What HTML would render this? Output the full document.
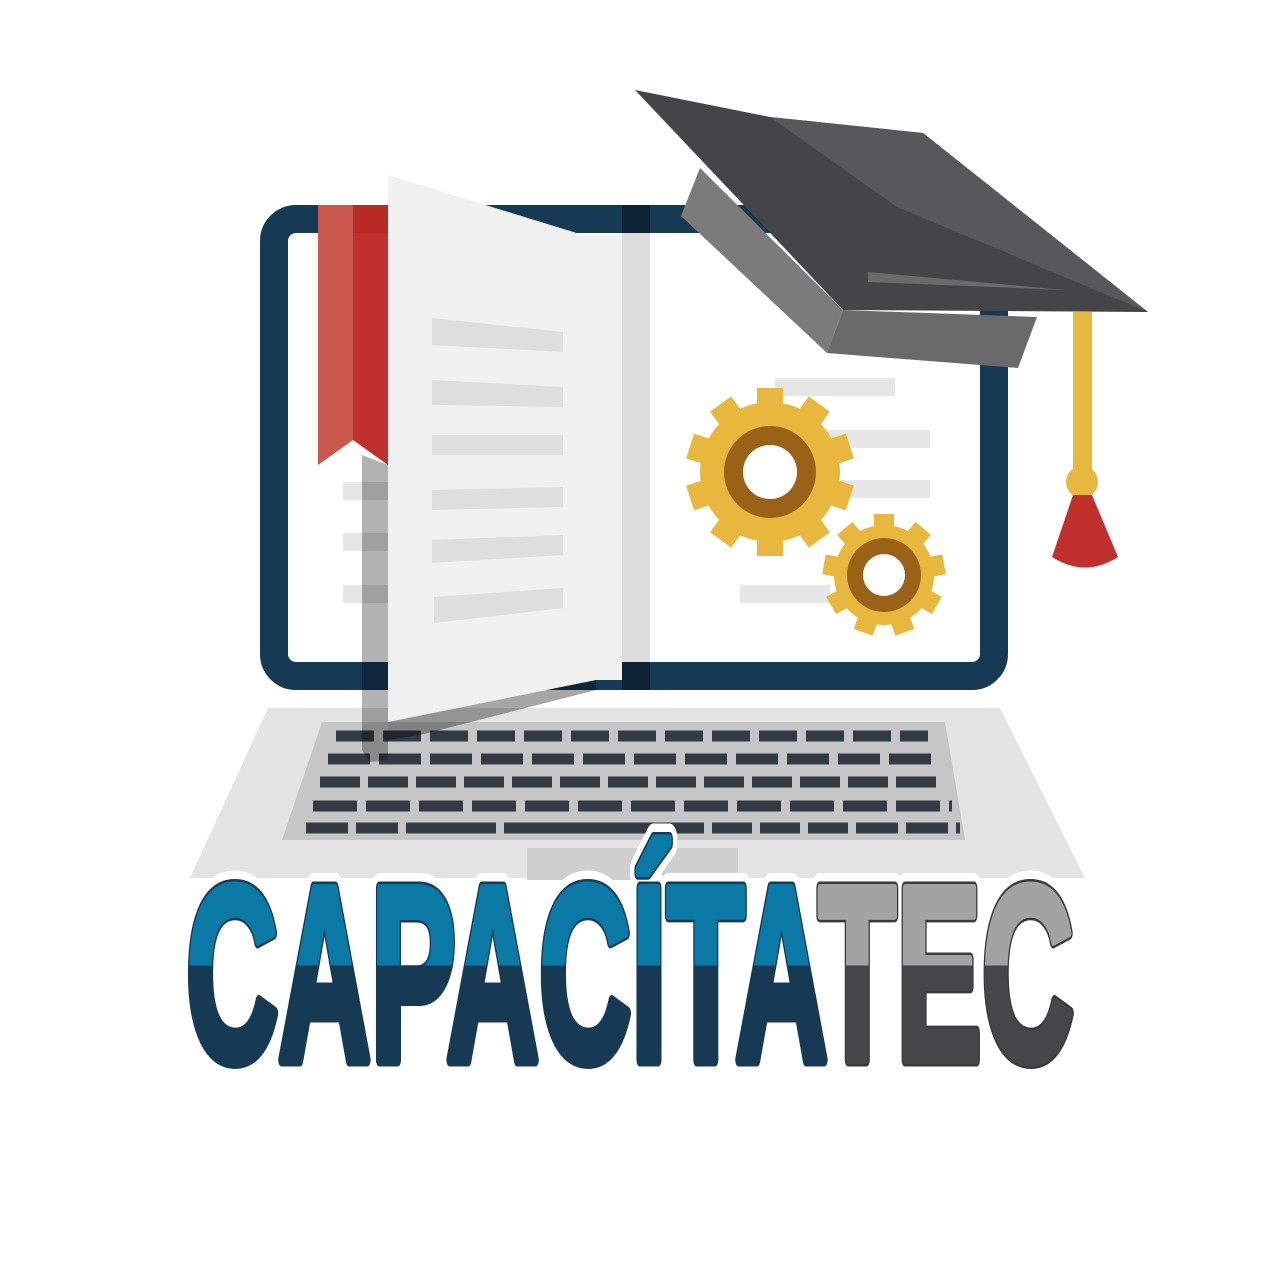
<!DOCTYPE html>
<html><head><meta charset="utf-8"><style>
html,body{margin:0;padding:0;background:#fff;}
svg{display:block;}
</style></head><body>
<svg width="1276" height="1276" viewBox="0 0 1276 1276" xmlns="http://www.w3.org/2000/svg">
<defs>
<linearGradient id="gb" x1="0" y1="875" x2="0" y2="1068" gradientUnits="userSpaceOnUse">
<stop offset="0" stop-color="#0b79a5"/><stop offset="0.47" stop-color="#0b79a5"/><stop offset="0.47" stop-color="#173a54"/><stop offset="1" stop-color="#173a54"/>
</linearGradient>
<linearGradient id="gg" x1="0" y1="875" x2="0" y2="1068" gradientUnits="userSpaceOnUse">
<stop offset="0" stop-color="#a3a3a3"/><stop offset="0.47" stop-color="#a3a3a3"/><stop offset="0.47" stop-color="#454648"/><stop offset="1" stop-color="#454648"/>
</linearGradient>
</defs>
<rect width="1276" height="1276" fill="#fff"/>
<polygon points="268,708 1000,708 1085,878 190,878" fill="#e3e3e3"/>
<polygon points="322,722 945,722 965,840 282,840" fill="#c6c6c6"/>
<g stroke="#343a44" stroke-width="11">
<line x1="336" y1="736" x2="928" y2="736" stroke-dasharray="38 9"/>
<line x1="328" y1="759" x2="936" y2="759" stroke-dasharray="42 9"/>
<line x1="320" y1="782" x2="944" y2="782" stroke-dasharray="40 8"/>
<line x1="313" y1="806" x2="952" y2="806" stroke-dasharray="44 9"/>
<line x1="306" y1="828" x2="960" y2="828" stroke-dasharray="42 8 42 8 90 8 200 8 40 8 40 8 40 8"/>
</g>
<rect x="527" y="848" width="211" height="32" fill="#cfcfcf"/>
<rect x="274" y="219" width="720" height="457" rx="22" fill="#fff" stroke="#173a54" stroke-width="28"/>
<rect x="622" y="205" width="28" height="485" fill="#dcdcdc"/>
<rect x="622" y="205" width="28" height="28" fill="#0d2232"/>
<rect x="622" y="662" width="28" height="28" fill="#0d2232"/>
<g fill="#e6e6e6">
<rect x="775" y="378" width="120" height="18"/>
<rect x="820" y="430" width="110" height="18"/>
<rect x="760" y="480" width="170" height="18"/>
<rect x="740" y="585" width="90" height="18"/>
</g>
<g fill="#e6e6e6">
<rect x="343" y="482" width="45" height="18"/><rect x="343" y="533" width="45" height="18"/><rect x="343" y="585" width="45" height="18"/>
</g>
<polygon points="318,205 353,205 353,440 318,465" fill="#c9574c"/>
<polygon points="353,205 388,205 388,465 353,440" fill="#c0302d"/>
<polygon points="353,205 388,205 388,233 353,233" fill="#b0281f" opacity="0.6"/>
<polygon points="362,455 388,465 388,760 370,762 362,750" fill="#000" opacity="0.3"/>
<polygon points="388,722 596,680 596,690 420,735 388,740" fill="#000" opacity="0.35"/>
<polygon points="388,175 583,235 622,235 622,680 596,680 388,722" fill="#f0f0f0"/>
<g fill="#dedede">
<polygon points="432,318 563,332 563,352 432,345"/>
<polygon points="432,380 563,387 563,407 432,405"/>
<polygon points="432,435 563,435 563,455 432,455"/>
<polygon points="432,490 563,487 563,507 432,510"/>
<polygon points="432,540 563,535 563,555 432,563"/>
<polygon points="434,597 563,588 563,608 434,623"/>
</g>
<g transform="translate(770,472)">
<g fill="#e8b83e">
<circle r="70"/>
<g id="t1"><rect x="-13" y="-84" width="26" height="24"/></g>
<use href="#t1" transform="rotate(36)"/><use href="#t1" transform="rotate(72)"/><use href="#t1" transform="rotate(108)"/><use href="#t1" transform="rotate(144)"/><use href="#t1" transform="rotate(180)"/><use href="#t1" transform="rotate(216)"/><use href="#t1" transform="rotate(252)"/><use href="#t1" transform="rotate(288)"/><use href="#t1" transform="rotate(324)"/>
</g>
<circle r="46" fill="#9a6217"/><circle r="27" fill="#fff"/>
</g>
<g transform="translate(884,575)">
<g fill="#e8b83e">
<circle r="50"/>
<g id="t2"><rect x="-10" y="-61" width="20" height="18"/></g>
<use href="#t2" transform="rotate(40)"/><use href="#t2" transform="rotate(80)"/><use href="#t2" transform="rotate(120)"/><use href="#t2" transform="rotate(160)"/><use href="#t2" transform="rotate(200)"/><use href="#t2" transform="rotate(240)"/><use href="#t2" transform="rotate(280)"/><use href="#t2" transform="rotate(320)"/>
</g>
<circle r="37" fill="#9a6217"/><circle r="21" fill="#fff"/>
</g>
<polygon points="700,168 681,216 827,353 843,310" fill="#7b7b7b"/>
<polygon points="843,310 827,353 1018,368 1037,317" fill="#6a6a6a"/>
<polygon points="635,90 770,117 923,133 1148,312 843,310" fill="#444548"/>
<polygon points="770,117 923,133 1148,312 1000,250 897,207" fill="#57585a"/>
<polygon points="868,272 1065,290 868,282" fill="#6a6a6a"/>
<rect x="1073" y="312" width="19" height="170" fill="#e8b83e"/>
<circle cx="1082" cy="482" r="16" fill="#e8b83e"/>
<path d="M1073,495 L1092,495 L1118,557 Q1085,578 1052,557 Z" fill="#c0302d"/>
<g font-family="'Liberation Sans Narrow','Liberation Sans',sans-serif" font-weight="bold" font-size="250">
<text x="186" y="1060" textLength="888" lengthAdjust="spacingAndGlyphs" fill="#fff" stroke="#fff" stroke-width="30" stroke-linejoin="round">CAPACÍTATEC</text>
<text x="186" y="1060" textLength="888" lengthAdjust="spacingAndGlyphs" fill="#173a54" stroke-linejoin="round"><tspan stroke="#173a54" stroke-width="13">CAPACÍTA</tspan><tspan fill="#3a3a3a" stroke="#3a3a3a" stroke-width="13">TEC</tspan></text>
<text x="186" y="1060" textLength="888" lengthAdjust="spacingAndGlyphs" stroke-width="8" stroke-linejoin="round"><tspan fill="url(#gb)" stroke="url(#gb)">CAPACÍTA</tspan><tspan fill="url(#gg)" stroke="url(#gg)">TEC</tspan></text>
</g>
</svg>
</body></html>
